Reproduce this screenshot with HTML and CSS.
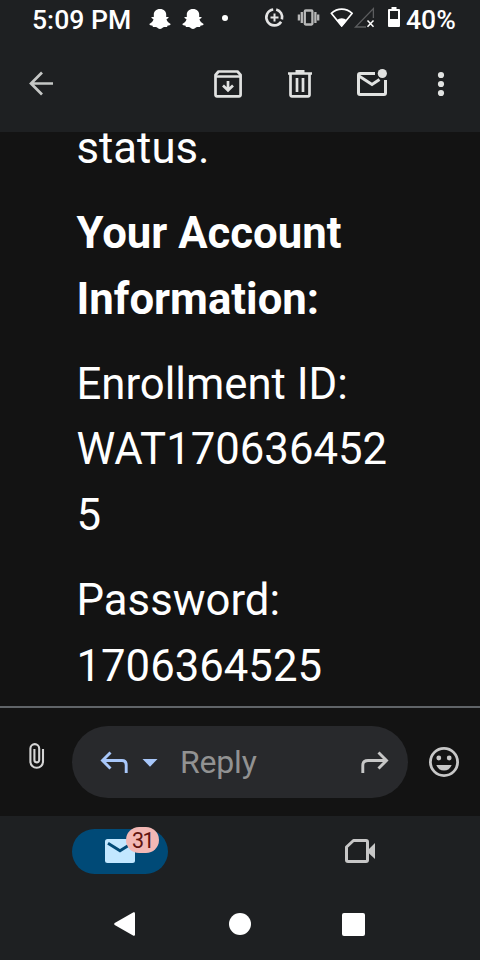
FILE: index.html
```html
<!DOCTYPE html>
<html lang="en">
<head>
<meta charset="utf-8">
<title>Mail</title>
<link rel="stylesheet" href="styles.css">
</head>
<body>
<div class="phone">
  <header class="top">
    <div class="status">
      <span class="time">5:09 PM</span>
      <svg class="ghost" viewBox="0 0 22 20"><path d="M11 0C7 0 4.800 2.500 4.800 5.500V8L2.500 8C2 9 3.500 9.800 4.500 10.300C4 12.500 2.500 14 .3 15C.5 16.200 2 16.400 3.300 16.600L4 18H7C8.500 18.500 9.500 20 11 20S13.500 18.500 15 18H18L18.700 16.600C20 16.400 21.500 16.200 21.700 15C19.500 14 18 12.500 17.500 10.300C18.500 9.800 20 9 19.500 8L17.200 8V5.500C17.200 2.500 15 0 11 0Z"/></svg>
      <svg class="ghost second" viewBox="0 0 22 20"><path d="M11 0C7 0 4.800 2.500 4.800 5.500V8L2.500 8C2 9 3.500 9.800 4.500 10.300C4 12.500 2.500 14 .3 15C.5 16.200 2 16.400 3.300 16.600L4 18H7C8.500 18.500 9.500 20 11 20S13.500 18.500 15 18H18L18.700 16.600C20 16.400 21.500 16.200 21.700 15C19.500 14 18 12.500 17.500 10.300C18.500 9.800 20 9 19.500 8L17.200 8V5.500C17.200 2.500 15 0 11 0Z"/></svg>
      <span class="dot"></span>
      <svg class="system" viewBox="262 0 140 40">
        <g fill="none" stroke="#e4e4e4">
          <path stroke-width="2.600" d="M273.200 9.500A8 8 0 1 0 281.100 21.700"/>
          <path stroke-width="2.600" d="M276.200 9.500A8 8 0 0 1 281.900 19.300"/>
          <path stroke-width="2" d="M274.500 13.500v8M270.500 17.500h8"/>
        </g>
        <g fill="none" stroke="#b8b8b8" stroke-width="2.300">
          <rect x="304.800" y="10.500" width="7.600" height="14" rx="1"/>
          <path d="M301.800 12v11M315.400 12v11M298.900 14.500v6M318.200 14.500v6"/>
        </g>
        <path fill="none" stroke="#fff" stroke-width="1.700" stroke-linejoin="round" d="M331.300 13.300C337.500 7.800 346 7.800 352.200 13.300L341.700 26Z"/>
        <path fill="#fff" d="M336.500 20.200Q341.700 16.500 347 20.200L341.700 26.700Z"/>
        <path fill="none" stroke="#5c5d5f" stroke-width="1.300" d="M373.400 18V8.500L355.500 27H366"/>
        <path stroke="#fff" stroke-width="1.500" d="M367.500 20.500l6 6.200M373.500 20.500l-6 6.200"/>
        <path fill="#fff" fill-rule="evenodd" d="M391.500 7h5v2h2.500q1 0 1 1v16q0 1-1 1h-10q-1 0-1-1V10q0-1 1-1h2.500ZM390 11v8h8v-8Z"/>
      </svg>
      <span class="percent">40%</span>
    </div>
    <div class="toolbar">
      <svg class="back" viewBox="28 70 26 28"><path fill="none" stroke="#c5c7c6" stroke-width="2.700" d="M53 83.500H31M42 72.500L31 83.500L42 94.500"/></svg>
      <svg class="archive" viewBox="212 68 32 32"><g fill="none" stroke="#e1e2e1" stroke-width="2.700"><path stroke-linejoin="round" d="M215.500 75L218.500 71.500H237.500L240.600 75V94.500Q240.600 96.300 239 96.300H217Q215.500 96.300 215.500 94.500Z"/><path d="M216 76.500H240M228 81V90M223 85.500L228 90.300L233 85.500"/></g></svg>
      <svg class="trash" viewBox="284 68 32 32"><g fill="none" stroke="#e1e2e1" stroke-width="2.700"><path d="M288 73.500H312M295.500 71.300H304.500M290.500 74V94.500Q290.500 96.300 292 96.300H308Q309.500 96.300 309.500 94.500V74"/><path d="M297 78V92M303 78V92"/></g></svg>
      <svg class="unread" viewBox="356 68 32 32"><path fill="none" stroke="#e1e2e1" stroke-width="3" d="M375 73.500H360Q358.500 73.500 358.500 75V93Q358.500 94.500 360 94.500H384Q385.500 94.500 385.500 93V80M359 76L372 84.500L379.500 79.500"/><circle cx="382.300" cy="73.500" r="4.600" fill="#e1e2e1"/></svg>
      <svg class="more" viewBox="436 70 10 28"><g fill="#e1e2e1"><circle cx="441" cy="75" r="3.100"/><circle cx="441" cy="84" r="3.100"/><circle cx="441" cy="93" r="3.100"/></g></svg>
    </div>
  </header>

  <main class="message">
    <p>status.</p>
    <p><strong>Your Account Information:</strong></p>
    <p>Enrollment ID: WAT1706364525</p>
    <p>Password: 1706364525</p>
  </main>

  <section class="composer">
    <svg class="clip" viewBox="26 740 20 32"><path fill="none" stroke="#d5d5d5" stroke-width="2.100" d="M43 749V761.500A6.300 6.300 0 0 1 30.400 761.500V748.500A4.400 4.400 0 0 1 39.200 748.500V760A2.400 2.400 0 0 1 34.400 760V749"/></svg>
    <div class="reply">
      <svg class="reply-arrow" viewBox="98 748 34 28"><path fill="none" stroke="#a8c7fa" stroke-width="2.900" d="M110.500 752.500L102.500 760.500L110.500 768.500M103 760.500H122Q126.200 760.500 126.200 765V773"/></svg>
      <svg class="caret" viewBox="142 758 16 10"><path fill="#a8c7fa" d="M142.500 759H157.500L150 766.700Z"/></svg>
      <span class="hint">Reply</span>
      <svg class="forward" viewBox="358 748 34 28"><path fill="none" stroke="#c7c7c7" stroke-width="2.900" d="M378.500 752.500L386.500 760.500L378.500 768.500M386 760.500H368Q362.800 760.500 362.800 765.500V773"/></svg>
    </div>
    <svg class="smile" viewBox="428 746 32 32"><circle cx="444" cy="762" r="13.600" fill="none" stroke="#c7c7c7" stroke-width="2.800"/><g fill="#c7c7c7"><circle cx="438.800" cy="758" r="2.400"/><circle cx="449.200" cy="758" r="2.400"/><path d="M436.300 765H451.700Q449.500 770.500 444 770.500T436.300 765Z"/></g></svg>
  </section>

  <nav class="tabs">
    <div class="tab-mail">
      <svg class="envelope" viewBox="0 0 30 24"><rect width="30" height="24" rx="2.500" fill="#c2e7ff"/><path fill="none" stroke="#004a77" stroke-width="2.900" d="M3 4.300L15 11.800L27 4.300"/></svg>
      <span class="badge">31</span>
    </div>
    <svg class="meet" viewBox="344 838 32 26"><path fill="none" stroke="#c7c7c7" stroke-width="3" stroke-linejoin="round" d="M346.500 847L353.500 840.500H366Q367.500 840.500 367.500 842V860Q367.500 861.500 366 861.500H348Q346.500 861.500 346.500 860Z"/><path fill="#c7c7c7" d="M368 850L375 843V859L368 852.500Z"/></svg>
  </nav>
  <div class="system-nav">
    <svg class="nav-back" viewBox="0 0 22 24"><path fill="#fff" d="M.7 11L19.500 .3Q21 -.2 21 1.500V22.500Q21 24.200 19.500 23.700L.7 13Q-.3 12 .7 11Z"/></svg>
    <span class="nav-home"></span>
    <span class="nav-recent"></span>
  </div>
</div>
</body>
</html>
```
FILE: styles.css
```css
* { box-sizing: border-box; }
body {
  margin: 0;
  background: #1f2022;
  color: #fff;
  font-family: Roboto, "Liberation Sans", sans-serif;
}
svg { display: block; flex: none; }
.phone {
  width: 480px;
  height: 960px;
  display: flex;
  flex-direction: column;
  overflow: hidden;
  background: #1e2022;
}
.top { height: 132px; flex: none; }
.status {
  height: 40px;
  display: flex;
  align-items: center;
  font-size: 26.6px;
  font-weight: 500;
  line-height: 40px;
  white-space: nowrap;
}
.time { width: 149px; padding-left: 32px; flex: none; }
.ghost { width: 22px; height: 20px; fill: #fff; margin-top: -2px; }
.second { margin-left: 11px; }
.dot { width: 6px; height: 6px; margin: -4px 0 0 18px; border-radius: 50%; background: #fff; }
.system { width: 140px; height: 40px; margin-left: 34px; }
.percent { margin-left: 4px; }

.toolbar { height: 92px; display: flex; align-items: flex-start; padding: 28px 0 0 28px; }
.back { width: 26px; height: 28px; margin-top: 2px; }
.archive { width: 32px; height: 32px; margin-left: 158px; }
.trash, .unread { width: 32px; height: 32px; margin-left: 40px; }
.more { width: 10px; height: 28px; margin: 2px 0 0 48px; }

.message {
  height: 574px;
  flex: none;
  padding: 0 77px 0 76.5px;
  overflow: hidden;
  background: #131313;
  font-size: 43.7px;
  line-height: 65.5px;
}
.message p { margin: 0 0 19.8px; overflow-wrap: anywhere; }
.message p:first-child { margin-top: -16.2px; }

.composer {
  height: 110px;
  flex: none;
  display: flex;
  align-items: center;
  padding-left: 26px;
  border-top: 2px solid #606468;
  background: #131313;
}
.clip { width: 20px; height: 32px; margin-top: -12px; }
.reply {
  width: 336px;
  height: 72px;
  margin-left: 26px;
  padding-left: 26px;
  display: flex;
  align-items: center;
  border-radius: 36px;
  background: #28292c;
}
.reply-arrow { width: 34px; height: 28px; }
.caret { width: 16px; height: 10px; margin: 2px 0 0 10px; }
.hint { width: 178px; margin-left: 22px; color: #929292; font-size: 32px; letter-spacing: -0.2px; line-height: 40px; }
.forward { width: 34px; height: 28px; }
.smile { width: 32px; height: 32px; margin-left: 20px; }

.tabs { height: 72px; flex: none; display: flex; padding: 13px 0 0 72px; }
.tab-mail {
  position: relative;
  width: 96px;
  height: 45px;
  padding: 10px 0 0 33px;
  border-radius: 23px;
  background: #004a77;
}
.envelope { width: 30px; height: 24px; }
.badge {
  position: absolute;
  left: 54px;
  top: -2px;
  width: 33px;
  height: 26px;
  border-radius: 13px;
  background: #f2b8b5;
  color: #601410;
  font-size: 21.5px;
  letter-spacing: -1.6px;
  line-height: 27px;
  text-align: center;
}
.meet { width: 32px; height: 26px; margin: 9px 0 0 176px; }

.system-nav { height: 72px; display: flex; align-items: center; padding-left: 114px; }
.nav-back { width: 22px; height: 24px; }
.nav-home { width: 22px; height: 22px; margin-left: 93px; border-radius: 50%; background: #fff; }
.nav-recent { width: 23px; height: 23px; margin-left: 91px; border-radius: 2px; background: #fff; }
```
